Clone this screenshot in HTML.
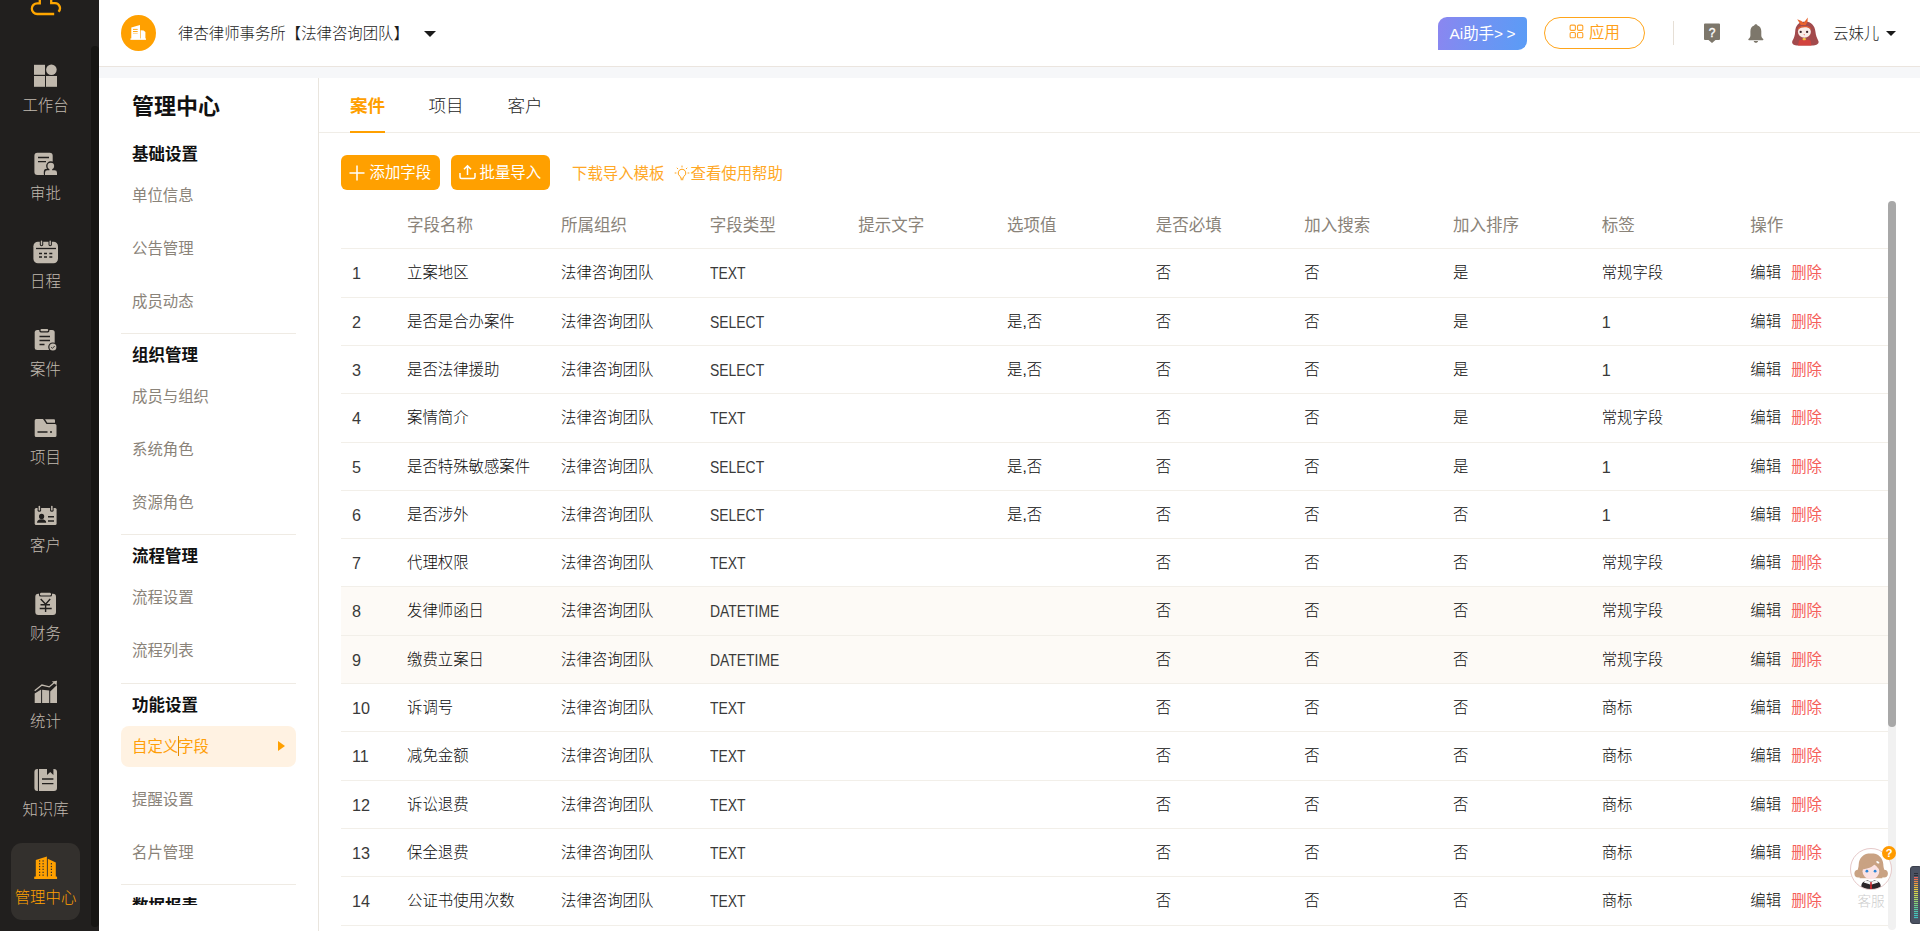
<!DOCTYPE html>
<html lang="zh-CN">
<head>
<meta charset="utf-8">
<title>管理中心 - 自定义字段</title>
<style>
*{box-sizing:border-box;margin:0;padding:0}
html,body{width:1920px;height:931px;overflow:hidden;background:#fff}
body{position:relative;font-family:"Liberation Sans","Noto Sans CJK SC",sans-serif;font-size:15.4px;font-weight:300;color:#0c0c0c}
svg{display:block}
/* sidebar */
#sb{position:absolute;left:0;top:0;width:99px;height:931px;background:#211f1e;overflow:hidden}
#sb .strip{position:absolute;left:91px;top:46px;width:8px;height:881px;background:#161513;border-radius:4px}
#sb .logo{position:absolute;left:30px;top:-12px}
.nv{position:absolute;left:0;width:91px;height:88px;color:#c2bab0;text-align:center}
.nv svg{position:absolute;left:34px;top:0}
.nv span{position:absolute;left:0;width:91px;top:31px;line-height:22px;font-size:15.4px}
.nv.act{color:#ffa000}
#sb .actbg{position:absolute;left:11px;top:843px;width:69px;height:77px;border-radius:11px;background:#33302d}
/* header */
#hd{position:absolute;left:99px;top:0;width:1821px;height:67px;background:#fff;border-bottom:1px solid #ebe5df}
#band{position:absolute;left:99px;top:67px;width:1821px;height:11px;background:#f6f7f9}
#hd .org{position:absolute;left:22px;top:15px;width:35px;height:36px;border-radius:50%;background:#ffa000}
#hd .orgname{position:absolute;left:79px;top:22px;line-height:24px;font-size:15.4px;color:#1d1d1d;white-space:nowrap}
.caret{position:absolute;width:0;height:0;border-left:6px solid transparent;border-right:6px solid transparent;border-top:6px solid #1a1a1a}
#hd .ai{position:absolute;left:1339px;top:17px;width:89px;height:33px;border-radius:9px 4px 9px 0;background:linear-gradient(100deg,#8b86f0 0%,#6d94f3 55%,#5a9cf6 100%);color:#fff;font-size:15.4px;font-weight:400;line-height:34px;text-align:center;white-space:nowrap}
#hd .app{position:absolute;left:1445px;top:17px;width:101px;height:32px;border:1px solid #ffa51a;border-radius:16px;color:#ff9f1a;font-weight:400;font-size:15.4px;line-height:30px;white-space:nowrap}
#hd .app svg{position:absolute;left:24px;top:6.4px}
#hd .app span{position:absolute;left:44px;top:0}
#hd .vline{position:absolute;left:1574px;top:21px;width:1px;height:24px;background:#e6dfd6}
#hd .uname{position:absolute;left:1734px;top:22px;line-height:24px;font-size:15.4px;color:#1d1d1d;white-space:nowrap}
/* left menu */
#lm{position:absolute;left:99px;top:78px;width:220px;height:853px;background:#fff;border-right:1px solid #e9e5de;overflow:hidden}
#lm .clip{position:absolute;left:0;top:0;width:219px;height:826.5px;overflow:hidden}
#lm h1{position:absolute;left:33px;top:14px;font-size:22px;line-height:30px;font-weight:700;color:#111;white-space:nowrap}
#lm h2{position:absolute;left:33px;margin-top:0.2px;font-size:16.5px;line-height:24px;font-weight:700;color:#111;white-space:nowrap}
#lm .it{position:absolute;left:33px;margin-top:1.4px;font-size:15.4px;line-height:22px;color:#8a8379;font-weight:400;white-space:nowrap}
#lm .hr{position:absolute;left:22px;width:175px;height:1px;background:#efebe4}
#lm .sel{position:absolute;left:22px;top:648px;width:175px;height:41px;border-radius:8px;background:#fff2e2}
#lm .it.on{color:#ff9f0a}
#lm .tri{position:absolute;left:179px;top:663px;width:0;height:0;border-top:5.5px solid transparent;border-bottom:5.5px solid transparent;border-left:7px solid #ffa000}
#lm .ibeam{position:absolute;left:79px;top:658px;width:1px;height:20px;background:#e08a00}
/* main */
#mn{position:absolute;left:319px;top:78px;width:1601px;height:853px;background:#fff;overflow:hidden}
#mn .tab{position:absolute;top:15.5px;font-size:17.6px;line-height:24px;color:#1d1d1d;white-space:nowrap}
#mn .tab.on{color:#ff9f00;font-weight:700}
#mn .tabline{position:absolute;left:0;top:54px;width:1601px;height:1px;background:#f0ede7}
#mn .ink{position:absolute;left:31px;top:53px;width:35px;height:2px;background:#ffa000}
.btn{position:absolute;top:77px;height:35px;border-radius:6px;background:#ffa000;color:#fff;font-weight:400;font-size:15.4px;line-height:35px;white-space:nowrap}
.btn svg{position:absolute}
.btn span{position:absolute;top:0}
.lnk{position:absolute;top:85px;line-height:22px;font-size:15.4px;font-weight:400;color:#ffa826;white-space:nowrap}
/* table */
#tbl{position:absolute;left:22px;top:122px;width:1547px;font-weight:300}
.th,.tr{position:absolute;left:0;width:1547px;border-bottom:1px solid #f2efe9}
.th{top:0;height:49px;color:#8a8379;font-size:16.5px;font-weight:400}
.th .td{line-height:51.6px}
.tr.h48{height:48px}.tr.h49{height:49px}
.tr.h48 .td{line-height:48.2px}.tr.h49 .td{line-height:48.2px}
.tr .c0,.tr .c3{color:#3a3a3a}
.tr.hl{background:#fdfaf6}
.td{position:absolute;top:0;white-space:nowrap;padding-left:11px}
.c0{left:0}.c1{left:55px}.c2{left:209px}.c3{left:357.67px}.c4{left:506.33px}.c5{left:655px}.c6{left:803.67px}.c7{left:952.33px}.c8{left:1101px}.c9{left:1249.67px}.c10{left:1398.33px}
.lt{display:inline-block;font-size:16.2px;transform:scaleX(0.86);transform-origin:0 50%}
.tr .c0,.dg{font-size:16.2px}
.dg{color:#3a3a3a}
.del{color:#f5605a;margin-left:10px;font-weight:400}
.ed{color:#0c0c0c}
#vtrack{position:absolute;left:1888px;top:201px;width:8px;height:729px;border-radius:4px;background:#f1f1f1}
#vthumb{position:absolute;left:1888px;top:201px;width:8px;height:526px;border-radius:4px;background:#a8a8a8}
/* floating */
#kf{position:absolute;left:1850px;top:848px;width:42px;height:42px;border-radius:50%;border:1px solid #e6c9c9;background:#fff;overflow:hidden}
#kfq{position:absolute;left:1882px;top:846px;width:14px;height:14px;border-radius:50%;background:#ff9a00;color:#fff;font-size:11px;line-height:14px;text-align:center;font-weight:700}
#kft{position:absolute;left:1850px;top:892px;width:42px;text-align:center;font-size:13.6px;line-height:20px;color:#cdcdcd}
#meter{position:absolute;left:1910px;top:866px;width:12px;height:58px;border-radius:3px;background:#4b5262;border:1px solid #3a3f4c}

</style>
</head>
<body>
<div id="sb">
<div class="strip"></div>
<div class="actbg"></div>
<svg width="99" height="931" viewBox="0 0 99 931" style="position:absolute;left:0;top:0">
<g fill="none" stroke="#ffa600" stroke-width="2.3">
<path d="M39.8 -2V3.3H37.2A5.35 5.35 0 0 0 37.2 14H54.2"/>
<path d="M51.2 -2V3.2H55A5 5 0 0 1 58.5 11.7"/>
</g>
<g fill="#c0b8ad">
<!-- 工作台 -->
<rect x="34" y="64.8" width="11" height="10"/><circle cx="51.4" cy="69.8" r="5.3"/><rect x="34" y="76" width="11" height="10.8"/><rect x="46" y="76" width="11" height="10.8"/>
<!-- 审批 -->
<rect x="34.4" y="152.7" width="18.3" height="22.3" rx="3"/>
<!-- 日程 -->
<rect x="33.4" y="241.7" width="24.6" height="21.5" rx="4.5"/>
<!-- 案件 -->
<rect x="34.7" y="330" width="20" height="20" rx="2.5"/>
<!-- 项目 -->
<path d="M34.7 420.5a1.5 1.5 0 0 1 1.5-1.5H43L46.5 424H55a1.5 1.5 0 0 1 1.5 1.5V435.5a1.5 1.5 0 0 1-1.5 1.5H36.2a1.5 1.5 0 0 1-1.5-1.5z"/>
<path d="M45 419.3H54a1 1 0 0 1 1 1V422.7H47.3z"/>
<!-- 客户 -->
<rect x="34.7" y="508" width="21.9" height="17" rx="1.5"/>
<!-- 财务 -->
<rect x="35.3" y="593.7" width="20.7" height="21.3" rx="3"/>
<!-- 统计 -->
<path d="M34.7 693.6L41.1 689.5V703H34.7z"/><path d="M42.1 689.8L49.2 690.6V703H42.1z"/><path d="M50.2 691.4L57 685V703H50.2z"/>
<path d="M51.8 681.4L57 680.7L56.6 685.2z"/>
<!-- 知识库 -->
<path d="M37.9 769H37.4a3 3 0 0 0-3 3V788a3 3 0 0 0 3 3H37.9z"/><path d="M39 769H54a3 3 0 0 1 3 3V788a3 3 0 0 1-3 3H39z"/>
</g>
<path d="M34.7 690.7L41.9 685L49.2 686.9L54.5 682.4" fill="none" stroke="#c0b8ad" stroke-width="1.3"/>
<g fill="#211f1e">
<!-- 审批 person outline -->
<circle cx="50.8" cy="166" r="4.7"/><rect x="43.8" y="168.8" width="14.6" height="8" rx="3"/>
<!-- 日程 slots -->
<rect x="39.8" y="240" width="3.4" height="6.2" rx="1.6"/><rect x="48.5" y="240" width="3.4" height="6.2" rx="1.6"/>
<!-- 案件 clip, check -->
<rect x="39.3" y="327.8" width="10.1" height="4.6" rx="1.6"/><circle cx="52.9" cy="347.1" r="4.7"/>
<!-- 客户 -->
<rect x="37.6" y="505" width="3.5" height="6.8" rx="1.6"/><rect x="50.1" y="505" width="3.5" height="6.8" rx="1.6"/>
<circle cx="41.6" cy="516.4" r="2.6"/><path d="M37 522.8q0-3.6 4.6-3.6q4.6 0 4.6 3.6z"/>
<!-- 财务 clip -->
<rect x="39" y="591.8" width="13" height="4.8" rx="1.6"/>
<!-- 知识库 notch -->
<path d="M47 768V775L50.2 772L53.4 775V768z"/>
</g>
<g fill="#c0b8ad">
<circle cx="50.8" cy="166" r="3.3"/><rect x="49.4" y="168" width="2.8" height="3"/><path d="M45 175V172.7a2.4 2.4 0 0 1 2.4-2.4H54.6a2.4 2.4 0 0 1 2.4 2.4V175z"/>
<rect x="40.8" y="240.4" width="1.4" height="4.8" rx="0.7"/><rect x="49.5" y="240.4" width="1.4" height="4.8" rx="0.7"/>
<rect x="40.5" y="328.9" width="7.7" height="2.4" rx="1"/><circle cx="52.9" cy="347.1" r="3.5"/>
<rect x="38.6" y="505.8" width="1.5" height="4.8" rx="0.7"/><rect x="51.1" y="505.8" width="1.5" height="4.8" rx="0.7"/>
<rect x="40" y="592.8" width="11" height="2.7" rx="1.2"/>
</g>
<g fill="none" stroke="#211f1e" stroke-width="1.4">
<path d="M38 157.5H49M38 161.6H46"/>
<path d="M36 248.5H56" stroke-width="1.3"/>
<path d="M39 253.5H42M44 253.5H47M49.3 253.5H52.3M39 257H42M44 257H47M49.3 257H52.3" stroke-width="1.3"/>
<path d="M39.5 336.5H50M39.5 340.5H50M39.5 344.5H44.5" stroke-width="1.3"/>
<path d="M51.2 347.2l1.2 1.2l2.3-2.4" stroke-width="0.9"/>
<path d="M37.5 432H47.5M50 432H52" stroke-width="1.5"/>
<path d="M48 516.7H54M48 521H54" stroke-width="1.5"/>
<path d="M40.7 599L45.6 604.3L50.2 599M40.5 604.7H50M39.7 608.5H51.7M45.6 604.3V612"/>
<path d="M42 779H53.4M42 783.6H53.4"/>
</g>
<!-- 管理中心 -->
<g fill="#ffa000">
<path d="M35.8 860L46.9 856.5V877H35.8z"/><path d="M47.8 858.7L55.8 862.5V877H47.8z"/><rect x="34.2" y="876.5" width="22.9" height="2.5" rx="0.6"/>
</g>
<g fill="#33302d">
<rect x="39" y="860.3" width="1.2" height="1.3"/><rect x="42.5" y="860.3" width="1.2" height="1.3"/>
<rect x="39" y="863.1" width="1.2" height="1.3"/><rect x="42.5" y="863.1" width="1.2" height="1.3"/><rect x="50.8" y="863.1" width="1.2" height="1.3"/>
<rect x="39" y="865.9" width="1.2" height="1.3"/><rect x="42.5" y="865.9" width="1.2" height="1.3"/><rect x="50.8" y="865.9" width="1.2" height="1.3"/>
<rect x="39" y="868.7" width="1.2" height="1.3"/><rect x="42.5" y="868.7" width="1.2" height="1.3"/><rect x="50.8" y="868.7" width="1.2" height="1.3"/>
<rect x="39" y="871.7" width="1.2" height="1.3"/><rect x="42.5" y="871.7" width="1.2" height="1.3"/><rect x="50.8" y="871.7" width="1.2" height="1.3"/>
<rect x="39" y="874.5" width="1.2" height="1.3"/><rect x="42.5" y="874.5" width="1.2" height="1.3"/><rect x="50.8" y="874.5" width="1.2" height="1.3"/>
</g>
</svg>
<div class="nv" style="top:64px"><span>工作台</span></div>
<div class="nv" style="top:152px"><span>审批</span></div>
<div class="nv" style="top:240px"><span>日程</span></div>
<div class="nv" style="top:328px"><span>案件</span></div>
<div class="nv" style="top:416px"><span>项目</span></div>
<div class="nv" style="top:504px"><span>客户</span></div>
<div class="nv" style="top:592px"><span>财务</span></div>
<div class="nv" style="top:680px"><span>统计</span></div>
<div class="nv" style="top:768px"><span>知识库</span></div>
<div class="nv act" style="top:856px"><span>管理中心</span></div>
</div>

<div id="hd">
<div class="org"><svg width="35" height="35" viewBox="121 15 35 35" style="margin-top:0.4px"><g fill="#fff"><path d="M131.3 27.4L140 25V39.2H131.3z"/><path d="M140.6 30.2L143.6 30.4L145.4 32V39.2H140.6z"/><rect x="130.4" y="38.4" width="15.6" height="1.4"/></g><path d="M133 29.4H137.7M133 31.5H137.7" stroke="#ffa000" stroke-width="0.9" fill="none"/><path d="M133 33.4H137.7" stroke="#ffd089" stroke-width="0.9" fill="none"/></svg></div>
<div class="orgname">律杏律师事务所【法律咨询团队】</div>
<div class="caret" style="left:325px;top:30.5px"></div>
<div class="ai">Ai助手<span style="letter-spacing:3.5px;margin-right:-3.5px">&gt;&gt;</span></div>
<div class="app"><svg width="15" height="15" viewBox="0 0 16 16" fill="none" stroke="#ffa42a" stroke-width="1.2"><rect x="1.2" y="1.2" width="5.6" height="5.6" rx="1.2"/><rect x="9.1" y="1.2" width="5.6" height="5.6" rx="1.2"/><rect x="1.2" y="9.1" width="5.6" height="5.6" rx="1.2"/><rect x="9.1" y="9.1" width="5.6" height="5.6" rx="1.2"/></svg><span>应用</span></div>
<div class="vline"></div>
<svg width="18" height="21" viewBox="1703 22.5 18 21" style="position:absolute;left:1604px;top:22.5px"><path d="M1705 23H1719a1 1 0 0 1 1 1V38.6a1 1 0 0 1-1 1H1715.5L1712 42.5L1708.5 39.6H1705a1 1 0 0 1-1-1V24a1 1 0 0 1 1-1z" fill="#7d776b"/><text x="1712" y="36" text-anchor="middle" font-family="Liberation Sans, sans-serif" font-size="12" font-weight="400" fill="#fff" stroke="#fff" stroke-width="0.35">?</text></svg>
<svg width="18" height="21" viewBox="1747 22.5 18 21" style="position:absolute;left:1648px;top:22.5px"><g fill="#7d776b"><path d="M1755.9 23.7c0.9 0 1.5 0.6 1.6 1.4c2.4 0.8 3.8 2.9 3.8 5.6v4.3c0 1.4 0.8 2.6 1.9 3.6c0.5 0.5 0.2 1.1-0.5 1.1H1749c-0.7 0-1-0.6-0.5-1.1c1.1-1 1.9-2.2 1.9-3.6v-4.3c0-2.7 1.4-4.8 3.8-5.6c0.1-0.8 0.8-1.4 1.7-1.4z"/><path d="M1753.7 40.4h4.4c-0.2 1.1-1.1 1.8-2.2 1.8s-2-0.7-2.2-1.8z"/></g></svg>
<svg width="30" height="32" viewBox="1790 15 30 32" style="position:absolute;left:1691px;top:15px">
<path d="M1805 21.5c-6.500 0-9.500 4.500-9.800 10c-0.300 4.500-1.200 6.500-2.900 9.500c-0.800 2 0.700 3.800 3 4.200c3 0.500 16.500 0.500 19.500 0c2.500-0.400 4.500-2 3.600-4.200c-1.500-3.200-2.500-5-3-9.500c-0.600-5.500-3.900-10-10.400-10z" fill="#a24a4c"/>
<path d="M1799 40.500c2-1.200 9-1.200 11.500 0l1 5h-13.500z" fill="#d2433f"/>
<ellipse cx="1804.400" cy="31.800" rx="6.500" ry="5.900" fill="#f8ece7"/>
<path d="M1797.800 28.500c2-3.600 11-3.900 13.400-0.300l-0.800 0.800c-2.600-2.600-9.600-2.400-11.800 0.300z" fill="#dc5a32"/>
<path d="M1797.200 19.200l4.300 1.800l2 2.300l2-2.800l2.300-3l-0.300 4.200l-1.700 3.300h-5z" fill="#e9632d"/>
<circle cx="1800.700" cy="31.900" r="1.150" fill="#3a2226"/><circle cx="1807.100" cy="31.900" r="1.150" fill="#3a2226"/>
<path d="M1803.500 34.300h1.400l-0.700 1.300z" fill="#e2453f"/>
<rect x="1802.600" y="38" width="3.200" height="2.200" rx="0.800" fill="#f1c545"/>
</svg>
<div class="uname">云妹儿</div>
<div class="caret" style="left:1787px;top:30.5px;border-left-width:5.5px;border-right-width:5.5px;border-top-width:5.5px"></div>
</div>
<div id="band"></div>

<div id="lm"><div class="clip">
<h1>管理中心</h1>
<h2 style="top:64.0px">基础设置</h2>
<div class="it" style="top:106.0px">单位信息</div>
<div class="it" style="top:158.8px">公告管理</div>
<div class="it" style="top:211.6px">成员动态</div>
<div class="hr" style="top:255.4px"></div>
<h2 style="top:265.0px">组织管理</h2>
<div class="it" style="top:307.0px">成员与组织</div>
<div class="it" style="top:359.8px">系统角色</div>
<div class="it" style="top:412.6px">资源角色</div>
<div class="hr" style="top:456.4px"></div>
<h2 style="top:466.0px">流程管理</h2>
<div class="it" style="top:508.0px">流程设置</div>
<div class="it" style="top:560.8px">流程列表</div>
<div class="hr" style="top:605.4px"></div>
<h2 style="top:615.0px">功能设置</h2>
<div class="sel"></div><div class="tri"></div>
<div class="it on" style="top:657.0px">自定义字段</div>
<div class="ibeam"></div>
<div class="it" style="top:709.8px">提醒设置</div>
<div class="it" style="top:762.6px">名片管理</div>
<div class="hr" style="top:806.4px"></div>
<h2 style="top:816.0px">数据报表</h2>
</div></div>

<div id="mn">
<div class="tab on" style="left:31px">案件</div>
<div class="tab" style="left:109.5px">项目</div>
<div class="tab" style="left:188.5px">客户</div>
<div class="tabline"></div><div class="ink"></div>
<div class="btn" style="left:22px;width:99px"><svg width="16" height="16" viewBox="0 0 16 16" style="left:8px;top:9.5px" fill="none" stroke="#fff" stroke-width="1.5"><path d="M8 0.500V15.500M0.500 8H15.500"/></svg><span style="left:28.5px">添加字段</span></div>
<div class="btn" style="left:132px;width:99px"><svg width="17" height="16" viewBox="0 0 17 16" style="left:8px;top:9px" fill="none" stroke="#fff" stroke-width="1.5"><path d="M1 9V13a1.500 1.500 0 0 0 1.500 1.500H14.500a1.500 1.500 0 0 0 1.500-1.500V9M8.500 11V2M5 5.200L8.500 1.700L12 5.200"/></svg><span style="left:28.5px">批量导入</span></div>
<div class="lnk" style="left:253px">下载导入模板</div>
<svg width="16" height="18" viewBox="0 0 16 18" style="position:absolute;left:355px;top:87px" fill="none" stroke="#ffa31a" stroke-width="1"><path d="M8 4.200a3.800 3.800 0 0 1 2.200 6.900c-0.500 0.400-0.700 0.900-0.700 1.500v0.600h-3v-0.600c0-0.600-0.200-1.100-0.700-1.500a3.800 3.800 0 0 1 2.200-6.900z"/><path d="M6.700 14.700h2.600M8 0.600v1.800M2.800 2.800l1.200 1.200M13.200 2.800l-1.200 1.200M0.700 8h1.700M13.600 8h1.700"/></svg>
<div class="lnk" style="left:371.500px">查看使用帮助</div>
<div id="tbl">
<div class="th"><div class="td c0"></div><div class="td c1">字段名称</div><div class="td c2">所属组织</div><div class="td c3">字段类型</div><div class="td c4">提示文字</div><div class="td c5">选项值</div><div class="td c6">是否必填</div><div class="td c7">加入搜索</div><div class="td c8">加入排序</div><div class="td c9">标签</div><div class="td c10">操作</div></div>
<div class="tr h49" style="top:49px"><div class="td c0">1</div><div class="td c1">立案地区</div><div class="td c2">法律咨询团队</div><div class="td c3"><span class="lt">TEXT</span></div><div class="td c4"></div><div class="td c5"></div><div class="td c6">否</div><div class="td c7">否</div><div class="td c8">是</div><div class="td c9">常规字段</div><div class="td c10"><span class="ed">编辑</span><span class="del">删除</span></div></div>
<div class="tr h48" style="top:98px"><div class="td c0">2</div><div class="td c1">是否是合办案件</div><div class="td c2">法律咨询团队</div><div class="td c3"><span class="lt">SELECT</span></div><div class="td c4"></div><div class="td c5">是,否</div><div class="td c6">否</div><div class="td c7">否</div><div class="td c8">是</div><div class="td c9"><span class="dg">1</span></div><div class="td c10"><span class="ed">编辑</span><span class="del">删除</span></div></div>
<div class="tr h48" style="top:146px"><div class="td c0">3</div><div class="td c1">是否法律援助</div><div class="td c2">法律咨询团队</div><div class="td c3"><span class="lt">SELECT</span></div><div class="td c4"></div><div class="td c5">是,否</div><div class="td c6">否</div><div class="td c7">否</div><div class="td c8">是</div><div class="td c9"><span class="dg">1</span></div><div class="td c10"><span class="ed">编辑</span><span class="del">删除</span></div></div>
<div class="tr h49" style="top:194px"><div class="td c0">4</div><div class="td c1">案情简介</div><div class="td c2">法律咨询团队</div><div class="td c3"><span class="lt">TEXT</span></div><div class="td c4"></div><div class="td c5"></div><div class="td c6">否</div><div class="td c7">否</div><div class="td c8">是</div><div class="td c9">常规字段</div><div class="td c10"><span class="ed">编辑</span><span class="del">删除</span></div></div>
<div class="tr h48" style="top:243px"><div class="td c0">5</div><div class="td c1">是否特殊敏感案件</div><div class="td c2">法律咨询团队</div><div class="td c3"><span class="lt">SELECT</span></div><div class="td c4"></div><div class="td c5">是,否</div><div class="td c6">否</div><div class="td c7">否</div><div class="td c8">是</div><div class="td c9"><span class="dg">1</span></div><div class="td c10"><span class="ed">编辑</span><span class="del">删除</span></div></div>
<div class="tr h48" style="top:291px"><div class="td c0">6</div><div class="td c1">是否涉外</div><div class="td c2">法律咨询团队</div><div class="td c3"><span class="lt">SELECT</span></div><div class="td c4"></div><div class="td c5">是,否</div><div class="td c6">否</div><div class="td c7">否</div><div class="td c8">否</div><div class="td c9"><span class="dg">1</span></div><div class="td c10"><span class="ed">编辑</span><span class="del">删除</span></div></div>
<div class="tr h48" style="top:339px"><div class="td c0">7</div><div class="td c1">代理权限</div><div class="td c2">法律咨询团队</div><div class="td c3"><span class="lt">TEXT</span></div><div class="td c4"></div><div class="td c5"></div><div class="td c6">否</div><div class="td c7">否</div><div class="td c8">否</div><div class="td c9">常规字段</div><div class="td c10"><span class="ed">编辑</span><span class="del">删除</span></div></div>
<div class="tr hl h49" style="top:387px"><div class="td c0">8</div><div class="td c1">发律师函日</div><div class="td c2">法律咨询团队</div><div class="td c3"><span class="lt">DATETIME</span></div><div class="td c4"></div><div class="td c5"></div><div class="td c6">否</div><div class="td c7">否</div><div class="td c8">否</div><div class="td c9">常规字段</div><div class="td c10"><span class="ed">编辑</span><span class="del">删除</span></div></div>
<div class="tr hl h48" style="top:436px"><div class="td c0">9</div><div class="td c1">缴费立案日</div><div class="td c2">法律咨询团队</div><div class="td c3"><span class="lt">DATETIME</span></div><div class="td c4"></div><div class="td c5"></div><div class="td c6">否</div><div class="td c7">否</div><div class="td c8">否</div><div class="td c9">常规字段</div><div class="td c10"><span class="ed">编辑</span><span class="del">删除</span></div></div>
<div class="tr h48" style="top:484px"><div class="td c0">10</div><div class="td c1">诉调号</div><div class="td c2">法律咨询团队</div><div class="td c3"><span class="lt">TEXT</span></div><div class="td c4"></div><div class="td c5"></div><div class="td c6">否</div><div class="td c7">否</div><div class="td c8">否</div><div class="td c9">商标</div><div class="td c10"><span class="ed">编辑</span><span class="del">删除</span></div></div>
<div class="tr h49" style="top:532px"><div class="td c0">11</div><div class="td c1">减免金额</div><div class="td c2">法律咨询团队</div><div class="td c3"><span class="lt">TEXT</span></div><div class="td c4"></div><div class="td c5"></div><div class="td c6">否</div><div class="td c7">否</div><div class="td c8">否</div><div class="td c9">商标</div><div class="td c10"><span class="ed">编辑</span><span class="del">删除</span></div></div>
<div class="tr h48" style="top:581px"><div class="td c0">12</div><div class="td c1">诉讼退费</div><div class="td c2">法律咨询团队</div><div class="td c3"><span class="lt">TEXT</span></div><div class="td c4"></div><div class="td c5"></div><div class="td c6">否</div><div class="td c7">否</div><div class="td c8">否</div><div class="td c9">商标</div><div class="td c10"><span class="ed">编辑</span><span class="del">删除</span></div></div>
<div class="tr h48" style="top:629px"><div class="td c0">13</div><div class="td c1">保全退费</div><div class="td c2">法律咨询团队</div><div class="td c3"><span class="lt">TEXT</span></div><div class="td c4"></div><div class="td c5"></div><div class="td c6">否</div><div class="td c7">否</div><div class="td c8">否</div><div class="td c9">商标</div><div class="td c10"><span class="ed">编辑</span><span class="del">删除</span></div></div>
<div class="tr h49" style="top:677px"><div class="td c0">14</div><div class="td c1">公证书使用次数</div><div class="td c2">法律咨询团队</div><div class="td c3"><span class="lt">TEXT</span></div><div class="td c4"></div><div class="td c5"></div><div class="td c6">否</div><div class="td c7">否</div><div class="td c8">否</div><div class="td c9">商标</div><div class="td c10"><span class="ed">编辑</span><span class="del">删除</span></div></div>

</div>
</div>
<div id="vtrack"></div><div id="vthumb"></div>
<div id="kf"><svg width="40" height="40" viewBox="1851 849 40 40">
<path d="M1871 853.200c-7.500 0-12 4.800-12.300 11c-0.100 2-0.300 3.500-1 5.500l2 8.500h22.600l2-8.500c-0.700-2-0.900-3.500-1-5.500c-0.300-6.200-4.800-11-12.300-11z" fill="#c9a283"/>
<circle cx="1858.300" cy="873.600" r="3.900" fill="#c9a283"/><circle cx="1884" cy="873.600" r="3.900" fill="#c9a283"/>
<ellipse cx="1870.900" cy="871.600" rx="8.400" ry="7.600" fill="#fbe2e3"/>
<path d="M1861.800 869.500c0.500-6 4.500-9.500 9.200-9.500s8.700 3.500 9.200 9.500c-2.500-1.500-4-3.200-5.200-5.500c-2.500 3-7.500 5-13.200 5.500z" fill="#c9a283"/>
<circle cx="1866.900" cy="871.200" r="1.400" fill="#2f86d8"/><circle cx="1875.100" cy="871.200" r="1.400" fill="#2f86d8"/>
<ellipse cx="1877.800" cy="862.300" rx="1.700" ry="1" fill="#fff" transform="rotate(25 1877.800 862.300)"/>
<path d="M1860.500 890l1.200-6c1-2.300 3.800-3.300 5.600-3.700l3.700 1.400l3.700-1.400c1.800 0.400 4.600 1.400 5.600 3.700l1.200 6z" fill="#2a2528"/>
<path d="M1865.500 880.300l5.500 1.400l5.500-1.400l1.800 2.300l-7.300 2.200l-7.300-2.200z" fill="#f4f4f4"/>
<path d="M1870.300 882h1.400l0.500 8h-2.400z" fill="#c0262c"/>
</svg></div>
<div id="kfq">?</div>
<div id="kft">客服</div>
<div id="meter"><svg width="10" height="56" viewBox="1911 867 10 56">
<g stroke-width="1.100" fill="none">
<path d="M1914 873.500h4M1914 875.500h4" stroke="#2c2f38"/>
<path d="M1914 877.600h4" stroke="#f0645a"/><path d="M1914 879.600h4" stroke="#f2764f"/><path d="M1914 881.600h4" stroke="#f28a45"/><path d="M1914 883.600h4" stroke="#f3a03e"/><path d="M1914 885.600h4" stroke="#f3b43c"/><path d="M1914 887.600h4" stroke="#f1c53c"/><path d="M1914 889.600h4" stroke="#ecd23f"/><path d="M1914 891.600h4" stroke="#e6db45"/><path d="M1914 893.600h4" stroke="#dbe04c"/><path d="M1914 895.600h4" stroke="#cde055"/><path d="M1914 897.600h4" stroke="#bde05e"/><path d="M1914 899.600h4" stroke="#abdf68"/><path d="M1914 901.600h4" stroke="#98dd72"/><path d="M1914 903.600h4" stroke="#86da7d"/><path d="M1914 905.600h4" stroke="#74d78a"/><path d="M1914 907.600h4" stroke="#65d498"/><path d="M1914 909.600h4" stroke="#58d1a5"/><path d="M1914 911.600h4" stroke="#4fceb0"/><path d="M1914 913.600h4" stroke="#48cbb9"/><path d="M1914 915.600h4" stroke="#43c9c0"/><path d="M1914 917.600h4" stroke="#40c8c5"/>
</g></svg></div>

</body>
</html>
